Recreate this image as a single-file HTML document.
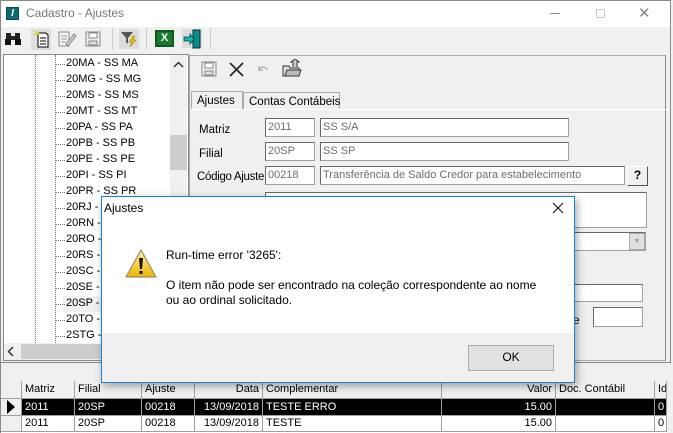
<!DOCTYPE html>
<html><head><meta charset="utf-8"><style>
*{box-sizing:border-box;margin:0;padding:0}
body{width:673px;height:433px;overflow:hidden;background:#f0f0f0;font-family:"Liberation Sans",sans-serif;font-size:11px;color:#000;position:relative}
.a{position:absolute;white-space:nowrap}
.inp{position:absolute;background:#fff;border:1px solid #a0a0a0;border-top-color:#696969;border-left-color:#696969;color:#6d6d6d;font-size:11px;padding:1px 2px;line-height:14px;white-space:nowrap;overflow:hidden}
.ti{position:absolute;left:66px;font-size:11px;line-height:13px;white-space:nowrap}
.hl{position:absolute;left:56px;width:9px;border-top:1px dotted #777}
.gh{position:absolute;top:381px;height:18px;background:#f0f0f0;border-right:1px solid #a0a0a0;border-bottom:1px solid #a0a0a0;padding:2px 3px;font-size:11px;white-space:nowrap;overflow:hidden}
.gc{position:absolute;height:16px;border-right:1px solid #a0a0a0;padding:1px 3px;font-size:11px;line-height:14px;white-space:nowrap}
</style></head><body>
<div class="a" style="left:0;top:0;width:671px;height:433px;border:1px solid #8a8a8a;border-bottom:none"></div>
<div class="a" style="left:1px;top:1px;width:669px;height:26px;background:#fff"></div>
<div class="a" style="left:6px;top:7px;width:13px;height:13px;background:#0f6b73;border:1px solid #0a4d53;color:#fff;font-size:10px;font-weight:bold;font-style:italic;text-align:center;line-height:11px">I</div>
<div class="a" style="left:26px;top:6px;font-size:12px;color:#777">Cadastro - Ajustes</div>
<div class="a" style="left:550px;top:13px;width:10px;border-top:1px solid #888"></div>
<div class="a" style="left:596px;top:9px;width:9px;height:9px;border:1px solid #ccc"></div>
<div class="a" style="left:638px;top:4px;font-size:15px;color:#888">✕</div>
<!-- toolbar -->
<svg class="a" style="left:4px;top:30px" width="18" height="18" viewBox="0 0 18 18"><rect x="2" y="3" width="5" height="10" fill="#222"/><rect x="11" y="3" width="5" height="10" fill="#222"/><rect x="6" y="6" width="6" height="4" fill="#222"/><rect x="1" y="9" width="6" height="6" fill="#111"/><rect x="11" y="9" width="6" height="6" fill="#111"/></svg>
<div class="a" style="left:31px;top:29px;width:20px;height:21px;background:#ddd"></div>
<svg class="a" style="left:33px;top:30px" width="18" height="18" viewBox="0 0 18 18"><path d="M5 3 H13 L15 5 V17 H5 Z" fill="#fff" stroke="#000"/><path d="M7 8h6M7 11h6M7 14h6" stroke="#000"/><path d="M3 1 L6 4 M1 4 L5 4" stroke="#dd0" stroke-width="1.5"/></svg>
<svg class="a" style="left:57px;top:30px" width="20" height="18" viewBox="0 0 20 18"><path d="M2 2 H12 V16 H2 Z" fill="#f4f4f4" stroke="#888"/><path d="M4 6h6M4 9h6M4 12h5" stroke="#999"/><path d="M9 14 L17 4 L19 6 L11 16 Z" fill="#ccc" stroke="#888"/></svg>
<svg class="a" style="left:85px;top:31px" width="16" height="16" viewBox="0 0 16 16"><path d="M1 1 H15 V15 H1 Z" fill="#eee" stroke="#888"/><rect x="4" y="2" width="8" height="5" fill="#fff" stroke="#888"/><rect x="4" y="10" width="8" height="4" fill="#ddd" stroke="#888"/></svg>
<div class="a" style="left:112px;top:28px;border-left:1px solid #ccc;height:22px"></div>
<div class="a" style="left:119px;top:29px;width:20px;height:20px;background:#ddd"></div>
<svg class="a" style="left:120px;top:30px" width="18" height="18" viewBox="0 0 18 18"><path d="M1 2 H13 L8 8 V14 L6 12 V8 Z" fill="#555"/><path d="M13 6 L9 12 H12 L10 17 L16 10 H13 L15 6 Z" fill="#f2c200" stroke="#8a6c00" stroke-width=".5"/></svg>
<div class="a" style="left:146px;top:28px;border-left:1px solid #ccc;height:22px"></div>
<div class="a" style="left:155px;top:30px;width:19px;height:17px;background:#1b7a2e;border:2px solid #0d5a1c;color:#fff;font-weight:bold;text-align:center;line-height:13px;font-size:11px">X</div>
<div class="a" style="left:182px;top:29px;width:20px;height:19px;background:#ddd"></div>
<svg class="a" style="left:182px;top:29px" width="20" height="20" viewBox="0 0 20 20"><rect x="11" y="1" width="7" height="18" fill="#0a8a8a" stroke="#033"/><path d="M2 8 H8 V5 L12 10 L8 15 V12 H2 Z" fill="#1bb" stroke="#044" stroke-width=".8"/></svg>
<div class="a" style="left:210px;top:28px;border-left:1px solid #ccc;height:22px"></div>
<!-- tree panel -->
<div class="a" style="left:3px;top:54px;width:186px;height:307px;background:#fff;border:1px solid #888"></div>
<div class="a" style="left:35px;top:55px;height:288px;border-left:1px dotted #777"></div>
<div class="a" style="left:55px;top:55px;height:288px;border-left:1px dotted #777"></div>
<div class="hl" style="top:64px"></div><div class="ti" style="top:57px">20MA - SS MA</div>
<div class="hl" style="top:80px"></div><div class="ti" style="top:73px">20MG - SS MG</div>
<div class="hl" style="top:96px"></div><div class="ti" style="top:89px">20MS - SS MS</div>
<div class="hl" style="top:112px"></div><div class="ti" style="top:105px">20MT - SS MT</div>
<div class="hl" style="top:128px"></div><div class="ti" style="top:121px">20PA - SS PA</div>
<div class="hl" style="top:144px"></div><div class="ti" style="top:137px">20PB - SS PB</div>
<div class="hl" style="top:160px"></div><div class="ti" style="top:153px">20PE - SS PE</div>
<div class="hl" style="top:176px"></div><div class="ti" style="top:169px">20PI - SS PI</div>
<div class="hl" style="top:192px"></div><div class="ti" style="top:185px">20PR - SS PR</div>
<div class="hl" style="top:208px"></div><div class="ti" style="top:201px">20RJ - </div>
<div class="hl" style="top:224px"></div><div class="ti" style="top:217px">20RN - </div>
<div class="hl" style="top:240px"></div><div class="ti" style="top:233px">20RO - </div>
<div class="hl" style="top:256px"></div><div class="ti" style="top:249px">20RS - </div>
<div class="hl" style="top:272px"></div><div class="ti" style="top:265px">20SC - </div>
<div class="hl" style="top:288px"></div><div class="ti" style="top:281px">20SE - </div>
<div class="a" style="left:63px;top:296px;width:40px;height:16px;background:#f0f0f0"></div>
<div class="hl" style="top:304px"></div><div class="ti" style="top:297px">20SP - </div>
<div class="hl" style="top:320px"></div><div class="ti" style="top:313px">20TO - </div>
<div class="hl" style="top:336px"></div><div class="ti" style="top:329px">2STG - </div>
<div class="a" style="left:170px;top:55px;width:17px;height:288px;background:#f0f0f0"></div>
<svg class="a" style="left:173px;top:61px" width="11" height="8" viewBox="0 0 11 8"><path d="M1 6 L5.5 1.5 L10 6" fill="none" stroke="#333" stroke-width="1.5"/></svg>
<div class="a" style="left:170px;top:135px;width:17px;height:35px;background:#cdcdcd"></div>
<div class="a" style="left:4px;top:343px;width:166px;height:17px;background:#f0f0f0"></div>
<svg class="a" style="left:7px;top:346px" width="8" height="11" viewBox="0 0 8 11"><path d="M6 1 L1.5 5.5 L6 10" fill="none" stroke="#333" stroke-width="1.5"/></svg>
<div class="a" style="left:21px;top:344px;width:100px;height:15px;background:#cdcdcd"></div>
<!-- right panel -->
<div class="a" style="left:189px;top:55px;width:477px;height:306px;border:1px solid #aaa;border-right:1px solid #888"></div>
<svg class="a" style="left:201px;top:61px" width="16" height="16" viewBox="0 0 16 16"><path d="M1 1 H15 V15 H1 Z" fill="#eee" stroke="#888"/><rect x="4" y="2" width="8" height="5" fill="#fff" stroke="#888"/><rect x="4" y="10" width="8" height="4" fill="#ddd" stroke="#888"/></svg>
<svg class="a" style="left:229px;top:62px" width="15" height="15" viewBox="0 0 15 15"><path d="M1 1 L14 14 M14 1 L1 14" stroke="#222" stroke-width="1.6"/></svg>
<svg class="a" style="left:257px;top:64px" width="12" height="10" viewBox="0 0 12 10"><path d="M2 2 V6 H6 M2 6 C4 2 9 2 10 6" fill="none" stroke="#999"/></svg>
<svg class="a" style="left:282px;top:59px" width="20" height="19" viewBox="0 0 20 19"><path d="M1 7 H7 L8 9 H17 V17 H1 Z" fill="#ddd" stroke="#333"/><path d="M3 17 L5 11 H19 L17 17 Z" fill="#bbb" stroke="#333"/><path d="M11 8 V3 H9 L13 0 L17 3 H15 V8" fill="#ccc" stroke="#333"/></svg>
<div class="a" style="left:191px;top:91px;width:52px;height:19px;border:1px solid #aaa;border-bottom:none;background:#f0f0f0;padding:3px 0 0 5px;font-size:11.5px">Ajustes</div>
<div class="a" style="left:243px;top:92px;width:97px;height:18px;border:1px solid #aaa;padding:3px 0 0 5px;font-size:11.5px">Contas Contábeis</div>
<div class="a" style="left:190px;top:109px;width:476px;border-top:1px solid #fff"></div>
<div class="a" style="left:199px;top:124px;font-size:11.5px">Matriz</div>
<div class="a" style="left:199px;top:148px;font-size:11.5px">Filial</div>
<div class="a" style="left:197px;top:171px;font-size:11.5px;letter-spacing:-0.3px">Código Ajuste</div>
<div class="inp" style="left:265px;top:118px;width:50px;height:19px">2011</div>
<div class="inp" style="left:320px;top:118px;width:249px;height:19px">SS S/A</div>
<div class="inp" style="left:265px;top:142px;width:50px;height:19px">20SP</div>
<div class="inp" style="left:320px;top:142px;width:249px;height:19px">SS SP</div>
<div class="inp" style="left:265px;top:166px;width:50px;height:19px">00218</div>
<div class="inp" style="left:320px;top:166px;width:305px;height:19px">Transferência de Saldo Credor para estabelecimento</div>
<div class="a" style="left:627px;top:166px;width:21px;height:20px;background:#f0f0f0;border:1px solid #fff;border-right-color:#555;border-bottom-color:#555;font-weight:bold;font-size:12px;text-align:center;line-height:17px">?</div>
<div class="inp" style="left:265px;top:192px;width:382px;height:36px"></div>
<div class="inp" style="left:560px;top:232px;width:86px;height:19px"></div>
<div class="a" style="left:629px;top:233px;width:16px;height:17px;background:#e0e0e0;border:1px solid #aaa;font-size:7px;color:#999;text-align:center;line-height:15px">▼</div>
<div class="inp" style="left:560px;top:284px;width:83px;height:18px"></div>
<div class="a" style="left:573px;top:313px;font-size:12px">e</div>
<div class="inp" style="left:593px;top:307px;width:50px;height:20px"></div>
<div class="a" style="left:667px;top:381px;width:4px;height:52px;background:#f0f0f0"></div>
<!-- bottom grid -->
<div class="a" style="left:1px;top:362px;width:670px;height:19px;background:#f0f0f0;border-top:1px solid #888"></div>
<div class="a" style="left:1px;top:381px;width:666px;height:52px;background:#fff"></div>
<div class="gh" style="left:1px;width:21px"></div>
<div class="gh" style="left:22px;width:53px">Matriz</div>
<div class="gh" style="left:75px;width:67px">Filial</div>
<div class="gh" style="left:142px;width:53px">Ajuste</div>
<div class="gh" style="left:195px;width:68px;text-align:right">Data</div>
<div class="gh" style="left:263px;width:179px">Complementar</div>
<div class="gh" style="left:442px;width:114px;text-align:right">Valor</div>
<div class="gh" style="left:556px;width:99px">Doc. Contábil</div>
<div class="gh" style="left:655px;width:12px">Id</div>
<div class="a" style="left:1px;top:399px;width:666px;height:16px;background:#000"></div>
<div class="a" style="left:1px;top:399px;width:21px;height:32px;background:#f0f0f0;border-right:1px solid #a0a0a0"></div>
<div class="a" style="left:7px;top:400px;width:0;height:0;border-top:7px solid transparent;border-bottom:7px solid transparent;border-left:8px solid #000"></div>
<div class="gc" style="top:399px;left:22px;width:53px;color:#fff">2011</div>
<div class="gc" style="top:399px;left:75px;width:67px;color:#fff">20SP</div>
<div class="gc" style="top:399px;left:142px;width:53px;color:#fff">00218</div>
<div class="gc" style="top:399px;left:195px;width:68px;color:#fff;text-align:right">13/09/2018</div>
<div class="gc" style="top:399px;left:263px;width:179px;color:#fff">TESTE ERRO</div>
<div class="gc" style="top:399px;left:442px;width:114px;color:#fff;text-align:right">15.00</div>
<div class="gc" style="top:399px;left:556px;width:99px;color:#fff"></div>
<div class="gc" style="top:399px;left:655px;width:12px;color:#fff">0</div>
<div class="gc" style="top:415px;left:22px;width:53px">2011</div>
<div class="gc" style="top:415px;left:75px;width:67px">20SP</div>
<div class="gc" style="top:415px;left:142px;width:53px">00218</div>
<div class="gc" style="top:415px;left:195px;width:68px;text-align:right">13/09/2018</div>
<div class="gc" style="top:415px;left:263px;width:179px">TESTE</div>
<div class="gc" style="top:415px;left:442px;width:114px;text-align:right">15.00</div>
<div class="gc" style="top:415px;left:556px;width:99px"></div>
<div class="gc" style="top:415px;left:655px;width:12px">0</div>
<div class="a" style="left:1px;top:415px;width:666px;border-top:1px solid #a0a0a0"></div>
<div class="a" style="left:1px;top:431px;width:666px;border-top:1px solid #a0a0a0"></div>
<!-- dialog -->
<div class="a" style="left:101px;top:196px;width:474px;height:187px;background:#fff;border:1px solid #1883d7;box-shadow:2px 3px 8px rgba(0,0,0,.35)"></div>
<div class="a" style="left:104px;top:201px;font-size:12px">Ajustes</div>
<svg class="a" style="left:552px;top:202px" width="12" height="12" viewBox="0 0 12 12"><path d="M1 1 L11 11 M11 1 L1 11" stroke="#111" stroke-width="1.1"/></svg>
<div class="a" style="left:102px;top:333px;width:472px;height:49px;background:#f0f0f0"></div>
<svg class="a" style="left:125px;top:249px" width="32" height="30" viewBox="0 0 32 30">
<defs><linearGradient id="g" x1="0" y1="0" x2="0" y2="1"><stop offset="0" stop-color="#fff2a0"/><stop offset="1" stop-color="#f0b400"/></linearGradient></defs>
<path d="M16 1 L31 28 L1 28 Z" fill="url(#g)" stroke="#9a8a70" stroke-width="1.2" stroke-linejoin="round"/>
<path d="M14 9 L18 9 L17 20 L15 20 Z" fill="#111"/><rect x="14.5" y="22" width="3" height="3" fill="#111"/></svg>
<div class="a" style="left:166px;top:248px;font-size:12px">Run-time error '3265':</div>
<div class="a" style="left:166px;top:278px;font-size:12px;line-height:15px">O item não pode ser encontrado na coleção correspondente ao nome<br>ou ao ordinal solicitado.</div>
<div class="a" style="left:468px;top:345px;width:86px;height:26px;background:#e1e1e1;border:1px solid #adadad;font-size:12px;text-align:center;line-height:23px">OK</div>
</body></html>
